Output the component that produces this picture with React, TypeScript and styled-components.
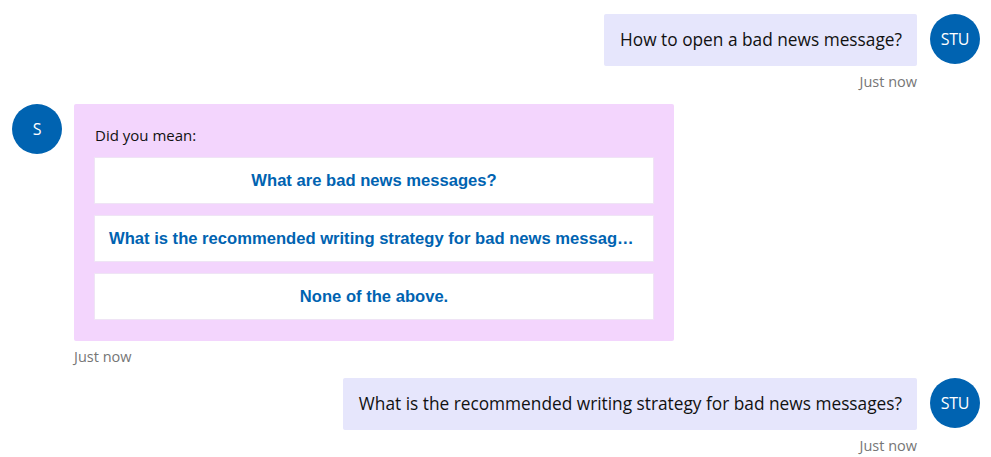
import React from "react";
import styled, { createGlobalStyle } from "styled-components";

const Global = createGlobalStyle`
  html, body { margin: 0; padding: 0; background: #ffffff; }
  body { font-family: "Open Sans", "Noto Sans", sans-serif; }
`;

const Transcript = styled.div`
  display: flex;
  flex-direction: column;
  padding: 14px 11px 0 12px;
`;

const Row = styled.div<{ $user?: boolean; $gapAfter: number }>`
  display: flex;
  flex-direction: ${(p) => (p.$user ? "row-reverse" : "row")};
  align-items: flex-start;
  gap: ${(p) => (p.$user ? 13 : 12)}px;
  margin-bottom: ${(p) => p.$gapAfter}px;
`;

const Avatar = styled.div`
  flex: none;
  width: 50px;
  height: 50px;
  border-radius: 50%;
  background: #0063b1;
  color: #ffffff;
  display: flex;
  align-items: center;
  justify-content: center;
  font-family: "Open Sans", "Noto Sans", sans-serif;
  font-size: 16px;
  letter-spacing: -0.3px;
`;

const Stack = styled.div<{ $user?: boolean }>`
  display: flex;
  flex-direction: column;
  align-items: ${(p) => (p.$user ? "flex-end" : "flex-start")};
`;

const Bubble = styled.div`
  background: #e6e6fc;
  border-radius: 2px;
  padding: 14px 15px 14px 16px;
  font-size: 17.3px;
  line-height: 24px;
  color: #111111;
`;

const Card = styled.div`
  background: #f3d5fd;
  border-radius: 2px;
  width: 600px;
  box-sizing: border-box;
  padding: 20px 20px 21px 20px;
  display: flex;
  flex-direction: column;
  gap: 11px;
`;

const Prompt = styled.div`
  font-size: 15px;
  line-height: 22px;
  color: #111111;
  padding-left: 1px;
`;

const Choice = styled.button`
  display: block;
  width: 100%;
  height: 47px;
  box-sizing: border-box;
  background: #ffffff;
  border: 1px solid #efe4f5;
  padding: 0 14px;
  font-family: "Liberation Sans", Arial, sans-serif;
  font-weight: 700;
  font-size: 16.6px;
  color: #0063b1;
  text-align: center;
  white-space: nowrap;
  overflow: hidden;
  text-overflow: ellipsis;
  cursor: pointer;
`;

const Stamp = styled.div`
  margin-top: 6px;
  font-size: 14.5px;
  line-height: 20px;
  color: #767676;
`;

export default function App() {
  return (
    <>
      <Global />
      <Transcript>
        <Row $user $gapAfter={12}>
          <Avatar>STU</Avatar>
          <Stack $user>
            <Bubble>How to open a bad news message?</Bubble>
            <Stamp>Just now</Stamp>
          </Stack>
        </Row>
        <Row $gapAfter={11}>
          <Avatar>S</Avatar>
          <Stack>
            <Card>
              <Prompt>Did you mean:</Prompt>
              <Choice>What are bad news messages?</Choice>
              <Choice>What is the recommended writing strategy for bad news messages?</Choice>
              <Choice>None of the above.</Choice>
            </Card>
            <Stamp>Just now</Stamp>
          </Stack>
        </Row>
        <Row $user $gapAfter={0}>
          <Avatar>STU</Avatar>
          <Stack $user>
            <Bubble>What is the recommended writing strategy for bad news messages?</Bubble>
            <Stamp>Just now</Stamp>
          </Stack>
        </Row>
      </Transcript>
    </>
  );
}
